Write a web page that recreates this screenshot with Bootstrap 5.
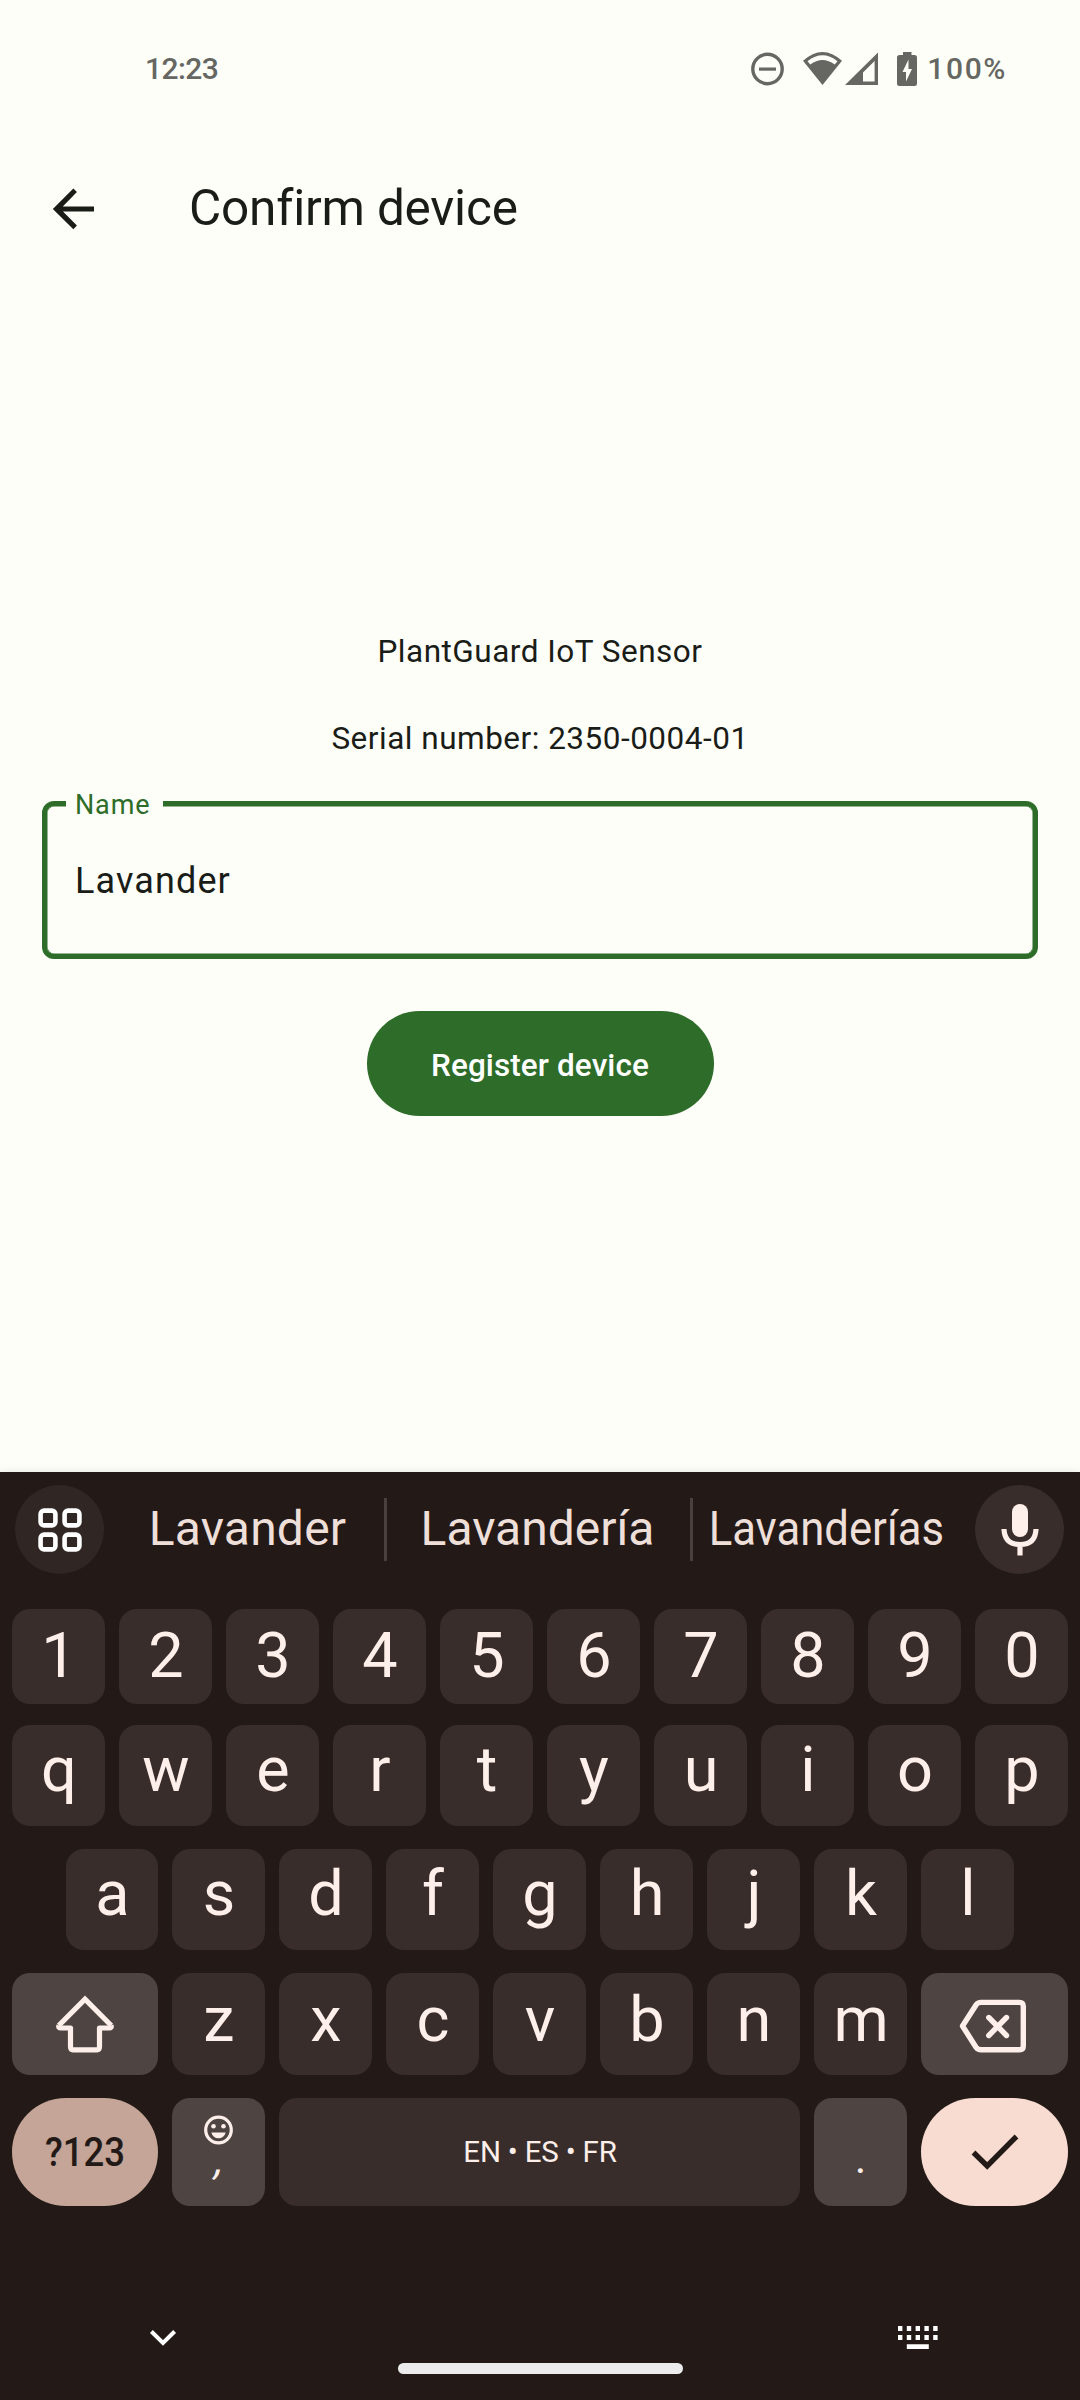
<!DOCTYPE html>
<html lang="en">
<head>
<meta charset="utf-8">
<meta name="viewport" content="width=device-width, initial-scale=1">
<title>Confirm device</title>
<link href="https://cdn.jsdelivr.net/npm/bootstrap@5.3.0/dist/css/bootstrap.min.css" rel="stylesheet">
<style>
  :root { --page: #fcfef7; --ink: #1a1c18; --green: #2e6c2a; --kb: #231a17; --key: #382d2b; --key-alt: #4e4441; --key-ink: #feefea; }
  body { font-family: Roboto, "Liberation Sans", sans-serif; background: var(--page); color: var(--ink); width: 1080px; height: 2400px; overflow: hidden; }
  svg { display: block; flex: none; }
  .statusbar { height: 136px; padding: 1px 73px 0 145px; color: #666763; font-size: 30px; font-weight: 500; line-height: 36px; }
  .clock { letter-spacing: -.6px; }
  .battery-text { letter-spacing: 1.6px; margin-left: 11px; }
  .appbar { height: 144px; padding-left: 47px; }
  .appbar h1 { font-size: 49.5px; font-weight: 400; line-height: 60px; margin-left: 88px; letter-spacing: -.2px; }
  .content { height: 1192px; padding: 349px 42px 0; }
  .info { font-size: 31.5px; line-height: 45px; letter-spacing: .5px; }
  .info + .info { margin-top: 42px; }
  .outlined { width: 996px; height: 158px; margin-top: 40px; }
  .outlined::before { content: ""; position: absolute; inset: 0; border: 5px solid var(--green); box-shadow: inset 0 0 0 .5px var(--green); border-radius: 12px; pointer-events: none; }
  .outlined label { position: absolute; left: 24px; top: -9px; width: 97px; padding-left: 9px; font-size: 27px; line-height: 27px; letter-spacing: .85px; color: var(--green); background: var(--page); }
  .outlined input { padding: 2px 33px 0; font-size: 36px; letter-spacing: 1.125px; color: #1a1c18; outline: 0; }
  .register, .register:hover { width: 347px; height: 105px; margin-top: 52px; background: var(--green); color: #fff; border: 0; font-size: 31.5px; letter-spacing: .1px; font-weight: 500; padding: 4px 0 0; }
  .keyboard { height: 928px; background: var(--kb); color: var(--key-ink); box-shadow: 0 -1px 8px rgba(0,0,0,.08); }
  .suggestions { height: 137px; padding: 13px 16px 35px 15px; font-size: 48px; line-height: 56px; color: #eedfd9; }
  .suggestions span { margin-top: -2px; margin-left: -2px; }
  .round { width: 89px; height: 89px; background: #302623; flex: none; }
  .round.mic { background: var(--key); }
  .divide { width: 3px; height: 63px; background: #4a403d; }
  .slot-a { width: 271px; margin-left: 9px; letter-spacing: .2px; } .slot-b { width: 303px; } .slot-c { width: 269px; margin-right: 13px; }
  .slot-c span { transform: scaleX(.91); }
  .keys { gap: 14px; padding: 0 12px; font-size: 63px; line-height: 70px; }
  .key { width: 93px; background: var(--key); border-radius: 18px; padding-bottom: 11px; flex: none; padding-left: 1px; }
  .wide { width: 147px; }
  .wide:first-child { width: 146px; }
  .alt { background: var(--key-alt); padding: 0; }
  .r1 { height: 95px; margin-bottom: 21px; } .r1 .key { padding-bottom: 2px; }
  .r2 { height: 101px; margin-bottom: 23px; }
  .r3 { height: 101px; margin-bottom: 23px; padding-left: 66px; } .r3 .key:first-child { width: 92px; }
  .r4 { height: 102px; margin-bottom: 23px; } .r4 .key:not(.alt) { padding-bottom: 9px; }
  .r5 { height: 108px; }
  .sym { background: #c4a597; color: #231a17; font-size: 41px; font-weight: 500; border-radius: 54px; padding: 0; }
  .sym span { transform: scaleX(.89); }
  .enter { background: #f8dcd1; border-radius: 54px; padding: 0; }
  .space { width: 521px; font-size: 29.5px; line-height: 36px; letter-spacing: -.2px; padding: 0 0 1px 1px; }
  .comma { font-size: 42px; line-height: 28px; transform: skewX(-14deg); margin-left: 3px; }
  .dot { font-size: 44px; line-height: 50px; padding-top: 12px; }
  .navbar-sys { height: 194px; }
  .navrow { height: 157px; padding: 107px 141px 0 148px; }
  .pill { width: 285px; height: 11px; background: #ececec; border-radius: 6px; }
</style>
</head>
<body>
<header class="statusbar d-flex align-items-center justify-content-between">
  <span class="clock">12:23</span>
  <div class="d-flex align-items-center">
    <svg width="164" height="36" viewBox="751 50 164 36" style="overflow:visible" fill="currentColor">
      <circle cx="766.5" cy="68" r="14.7" fill="none" stroke="currentColor" stroke-width="3.4"/>
      <path d="M758 66.5h17v3.2h-17z"/>
      <path fill-rule="evenodd" d="M802 59.8Q821.5 42 841 59.8L821.5 84ZM806.500 60.200L809.300 63.500Q821.500 54.500 833.700 63.500L836.500 60.200Q821.500 48.500 806.500 60.200Z"/>
      <path fill-rule="evenodd" d="M877 51.500V84H844ZM873.600 60L862 71.500V80.600H873.600Z"/>
      <path fill-rule="evenodd" d="M902 51h8.500v3h3q2.500 0 2.500 2.500v26q0 2.500-2.500 2.500h-15q-2.500 0-2.500-2.500v-26q0-2.500 2.500-2.500h3.500zM907.500 58.500L901.500 71H905V80.500L911 68H907.500Z"/>
    </svg>
    <span class="battery-text">100%</span>
  </div>
</header>

<nav class="appbar d-flex align-items-center">
  <svg width="54" height="54" viewBox="0 0 24 24" fill="#1a1c18"><path d="M20.900 11.300v2.300H7.100l6.200 6.200-1.600 1.600L2.600 12.400l9.100-9.100 1.600 1.600-6.300 6.400z"/></svg>
  <h1 class="mb-0">Confirm device</h1>
</nav>

<main class="content d-flex flex-column align-items-center">
  <p class="info mb-0">PlantGuard IoT Sensor</p>
  <p class="info mb-0">Serial number: 2350-0004-01</p>
  <div class="outlined position-relative">
    <label for="name">Name</label>
    <input id="name" type="text" value="Lavander" spellcheck="false" class="w-100 h-100 border-0 bg-transparent">
  </div>
  <button type="button" class="btn register rounded-pill">Register device</button>
</main>

<section class="keyboard position-relative">
  <div class="suggestions d-flex align-items-center">
    <div class="round rounded-circle d-flex align-items-center justify-content-center">
      <svg width="44" height="44" viewBox="0 0 44 44" fill="none" stroke="#fff" stroke-width="4.600"><rect x="2.600" y="2.600" width="14.800" height="14.800" rx="3.500"/><rect x="26.600" y="2.600" width="14.800" height="14.800" rx="3.500"/><rect x="2.600" y="26.600" width="14.800" height="14.800" rx="3.500"/><rect x="26.600" y="26.600" width="14.800" height="14.800" rx="3.500"/></svg>
    </div>
    <div class="slot-a d-flex justify-content-center"><span>Lavander</span></div>
    <div class="divide"></div>
    <div class="slot-b d-flex justify-content-center"><span>Lavandería</span></div>
    <div class="divide"></div>
    <div class="slot-c d-flex justify-content-center"><span>Lavanderías</span></div>
    <div class="round mic rounded-circle d-flex align-items-center justify-content-center">
      <svg width="38" height="52" viewBox="0 0 38 52"><rect x="11" y="0" width="16" height="33" rx="8" fill="#feefea"/><path d="M3 25Q3.500 40.500 19 40.500T35 25M19 40V51.500" fill="none" stroke="#feefea" stroke-width="5.200"/></svg>
    </div>
  </div>

  <div class="keys r1 d-flex">
    <div class="key d-flex align-items-center justify-content-center">1</div><div class="key d-flex align-items-center justify-content-center">2</div><div class="key d-flex align-items-center justify-content-center">3</div><div class="key d-flex align-items-center justify-content-center">4</div><div class="key d-flex align-items-center justify-content-center">5</div><div class="key d-flex align-items-center justify-content-center">6</div><div class="key d-flex align-items-center justify-content-center">7</div><div class="key d-flex align-items-center justify-content-center">8</div><div class="key d-flex align-items-center justify-content-center">9</div><div class="key d-flex align-items-center justify-content-center">0</div>
  </div>
  <div class="keys r2 d-flex">
    <div class="key d-flex align-items-center justify-content-center">q</div><div class="key d-flex align-items-center justify-content-center">w</div><div class="key d-flex align-items-center justify-content-center">e</div><div class="key d-flex align-items-center justify-content-center">r</div><div class="key d-flex align-items-center justify-content-center">t</div><div class="key d-flex align-items-center justify-content-center">y</div><div class="key d-flex align-items-center justify-content-center">u</div><div class="key d-flex align-items-center justify-content-center">i</div><div class="key d-flex align-items-center justify-content-center">o</div><div class="key d-flex align-items-center justify-content-center">p</div>
  </div>
  <div class="keys r3 d-flex">
    <div class="key d-flex align-items-center justify-content-center">a</div><div class="key d-flex align-items-center justify-content-center">s</div><div class="key d-flex align-items-center justify-content-center">d</div><div class="key d-flex align-items-center justify-content-center">f</div><div class="key d-flex align-items-center justify-content-center">g</div><div class="key d-flex align-items-center justify-content-center">h</div><div class="key d-flex align-items-center justify-content-center">j</div><div class="key d-flex align-items-center justify-content-center">k</div><div class="key d-flex align-items-center justify-content-center">l</div>
  </div>
  <div class="keys r4 d-flex">
    <div class="key wide alt d-flex align-items-center justify-content-center">
      <svg width="60" height="60" viewBox="0 0 60 60" fill="none" stroke="#feefea" stroke-width="5.200" stroke-linejoin="round"><path stroke-linejoin="miter" d="M3.800 31.500L30 5.200L56.200 31.500"/><path d="M4 31.500Q3 34 6 34H15.500V52.500Q15.500 55.800 18 55.800H42Q44.500 55.800 44.500 52.500V34H54Q57 34 56 31.500"/></svg>
    </div>
    <div class="key d-flex align-items-center justify-content-center">z</div><div class="key d-flex align-items-center justify-content-center">x</div><div class="key d-flex align-items-center justify-content-center">c</div><div class="key d-flex align-items-center justify-content-center">v</div><div class="key d-flex align-items-center justify-content-center">b</div><div class="key d-flex align-items-center justify-content-center">n</div><div class="key d-flex align-items-center justify-content-center">m</div>
    <div class="key wide alt d-flex align-items-center justify-content-center pt-1 pe-1">
      <svg width="68" height="54" viewBox="0 0 68 54" fill="none" stroke="#feefea" stroke-width="5.400" stroke-linejoin="round" stroke-linecap="round"><path d="M3.500 27L17 6Q18.800 3.400 22 3.400H60.500Q64.300 3.400 64.300 7.200V47Q64.300 50.800 60.500 50.800H22Q18.800 50.800 17 48.200Z"/><path d="M29.800 18.500L47.500 36.500M47.500 18.500L29.800 36.500" stroke-width="5.400"/></svg>
    </div>
  </div>
  <div class="keys r5 d-flex">
    <div class="key wide sym d-flex align-items-center justify-content-center"><span>?123</span></div>
    <div class="key alt d-flex flex-column align-items-center pt-3">
      <svg class="mt-0" width="32" height="32" viewBox="0 0 32 32" fill="#feefea"><circle cx="15.500" cy="16" r="12.800" fill="none" stroke="#feefea" stroke-width="3.200"/><circle cx="10.500" cy="12.200" r="2.300"/><circle cx="20.500" cy="12.200" r="2.300"/><path d="M8.300 18.500H22.700Q21 24.300 15.500 24.300T8.300 18.500z"/></svg>
      <span class="comma">,</span>
    </div>
    <div class="key space d-flex align-items-center justify-content-center">EN • ES • FR</div>
    <div class="key alt dot d-flex align-items-center justify-content-center">.</div>
    <div class="key wide enter d-flex align-items-center justify-content-center">
      <svg width="48" height="38" viewBox="0 0 48 38" fill="none" stroke="#231a17" stroke-width="5.400"><path d="M2.500 19.500L16.200 33L45.500 3.500"/></svg>
    </div>
  </div>

  <div class="navbar-sys d-flex flex-column align-items-center">
    <div class="navrow w-100 d-flex align-items-center justify-content-between">
      <svg width="30" height="24" viewBox="0 0 30 24" fill="none" stroke="#fff" stroke-width="4"><path d="M3.400 5.500L15 17L26.600 5.500"/></svg>
      <svg width="42" height="24" viewBox="0 0 42 24" fill="#fff"><path d="M1 0h4.400v5H1zM9.800 0h4.400v5H9.800zM18.600 0H23v5h-4.400zM27.400 0h4.400v5h-4.400zM36.200 0h4.400v5h-4.400zM1 9h4.400v5H1zM9.800 9h4.400v5H9.800zM18.600 9H23v5h-4.400zM27.400 9h4.400v5h-4.400zM36.200 9h4.400v5h-4.400zM9.800 18.200h22V23h-22z"/></svg>
    </div>
    <div class="pill"></div>
  </div>
</section>
<script src="https://cdn.jsdelivr.net/npm/bootstrap@5.3.0/dist/js/bootstrap.bundle.min.js"></script>
</body>
</html>
